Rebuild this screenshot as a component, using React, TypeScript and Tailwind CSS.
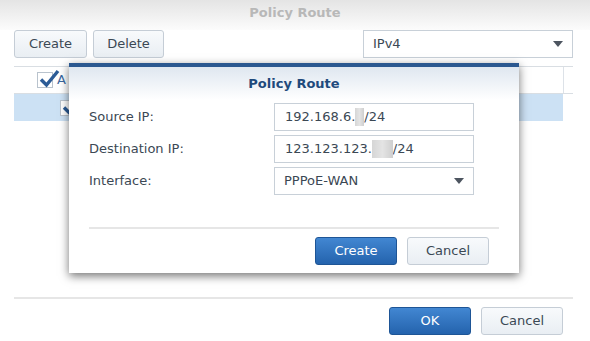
import React from 'react'

const font = { fontFamily: '"DejaVu Sans", Verdana, sans-serif' }

function Check({ className }: { className?: string }) {
  return (
    <span className={`relative inline-block w-[16px] h-[16px] border border-[#b9c3cd] bg-white ${className ?? ''}`}>
      <svg className="absolute left-[1px] top-[-4px]" width="21" height="19" viewBox="0 0 21 19">
        <path d="M2 10.5 L7.5 16 L19 2" fill="none" stroke="#2b5b96" strokeWidth="3.4" strokeLinejoin="miter" />
      </svg>
    </span>
  )
}

function Arrow() {
  return <span className="w-0 h-0 border-l-[5px] border-r-[5px] border-t-[6px] border-l-transparent border-r-transparent border-t-[#4d5560]" />
}

function GrayButton({ children, className }: { children: React.ReactNode; className?: string }) {
  return (
    <button className={`h-[28px] rounded-[3px] border border-[#c5cdd6] bg-gradient-to-b from-[#f8fafc] to-[#e9eef3] text-[13px] text-[#3b4854] ${className ?? ''}`}>
      {children}
    </button>
  )
}

function BlueButton({ children, className }: { children: React.ReactNode; className?: string }) {
  return (
    <button className={`h-[28px] rounded-[3px] border border-[#1e5596] bg-gradient-to-b from-[#4287d2] to-[#2463ad] text-[13px] text-white ${className ?? ''}`}>
      {children}
    </button>
  )
}

function Blur({ w }: { w: number }) {
  return (
    <span
      className="inline-block h-[18px] align-middle bg-gradient-to-r from-[#d6d6d6] via-[#e4e4e4] to-[#cfcfcf] blur-[0.4px]"
      style={{ width: w }}
    />
  )
}

export default function App() {
  return (
    <div className="relative w-[590px] h-[341px] overflow-hidden bg-white flex flex-col" style={font}>
      <div className="h-[30px] bg-gradient-to-b from-[#e4e4e4] to-[#fcfcfc] flex items-center justify-center">
        <span className="text-[13px] font-bold text-[#b8b8b8] -mt-[4px]">Policy Route</span>
      </div>

      <div className="flex items-center justify-between pl-[14px] pr-[17px]">
        <div className="flex gap-[6px]">
          <GrayButton className="w-[73px]">Create</GrayButton>
          <GrayButton className="w-[71px]">Delete</GrayButton>
        </div>
        <div className="w-[210px] h-[28px] border border-[#c8d0d8] bg-white flex items-center justify-between pl-[9px] pr-[9px] text-[13px] text-[#3b4854]">
          <span>IPv4</span>
          <Arrow />
        </div>
      </div>

      <div className="mx-[14px] mr-[17px] mt-[8px] flex-1 flex flex-col">
        <div className="h-[28px] border-t border-b border-[#d9dee3] flex">
          <div className="flex-1 flex items-center pl-[23px] gap-[4px]">
            <Check />
            <span className="text-[13px] text-[#3a67a0]">A</span>
          </div>
          <div className="w-[10px] border-l border-[#dde2e8]" />
        </div>
        <div className="h-[27px] mr-[10px] bg-[#cce1f4] flex items-center pl-[46px]">
          <Check />
        </div>
        <div className="flex-1" />
        <div className="h-[2px] bg-[#e6e6e6]" />
        <div className="flex justify-end gap-[10px] pt-[8px] pb-[6px] pr-[10px]">
          <BlueButton className="w-[82px]">OK</BlueButton>
          <GrayButton className="w-[82px]">Cancel</GrayButton>
        </div>
      </div>

      <div className="absolute left-[69px] top-[63px] w-[450px] h-[210px] bg-white border-t-4 border-[#2b5890] shadow-[0_3px_9px_rgba(0,0,0,0.55)] flex flex-col">
        <div className="h-[33px] bg-gradient-to-b from-[#dfe7f0] to-white flex items-center justify-center">
          <span className="text-[13px] font-bold text-[#1f4a7c]">Policy Route</span>
        </div>
        <div className="mt-[3px] flex flex-col gap-[4px] px-[20px] text-[13px] text-[#3b4854]">
          <div className="flex items-center">
            <span className="w-[185px]">Source IP:</span>
            <div className="w-[200px] h-[28px] border border-[#c8d0d8] flex items-center pl-[10px]">
              <span>192.168.6.</span>
              <Blur w={9} />
              <span>/24</span>
            </div>
          </div>
          <div className="flex items-center">
            <span className="w-[185px]">Destination IP:</span>
            <div className="w-[200px] h-[28px] border border-[#c8d0d8] flex items-center pl-[10px]">
              <span>123.123.123.</span>
              <Blur w={21} />
              <span>/24</span>
            </div>
          </div>
          <div className="flex items-center">
            <span className="w-[185px]">Interface:</span>
            <div className="w-[200px] h-[28px] border border-[#c8d0d8] flex items-center justify-between pl-[9px] pr-[9px]">
              <span>PPPoE-WAN</span>
              <Arrow />
            </div>
          </div>
        </div>
        <div className="mx-[20px] mt-[32px] h-[2px] bg-[#e6e6e6]" />
        <div className="flex justify-end gap-[10px] pt-[8px] pr-[30px]">
          <BlueButton className="w-[82px]">Create</BlueButton>
          <GrayButton className="w-[82px]">Cancel</GrayButton>
        </div>
      </div>
    </div>
  )
}
